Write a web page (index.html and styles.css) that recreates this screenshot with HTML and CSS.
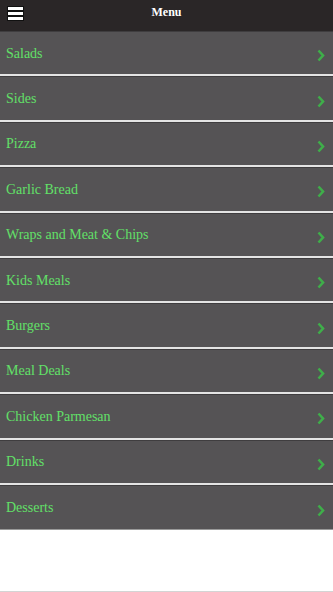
FILE: index.html
```html
<!DOCTYPE html>
<html>
<head>
<meta charset="utf-8">
<link rel="stylesheet" href="styles.css">
</head>
<body>
<header class="topbar">
  <span class="burger"><i></i><i></i><i></i></span>
  <h1 class="title">Menu</h1>
</header>
<ul class="menu">
  <li class="item"><span>Salads</span><svg class="chev" viewBox="0 0 8 13"><path d="M1.5 1.5 L6 6.5 L1.5 11.5" /></svg></li>
  <li class="item"><span>Sides</span><svg class="chev" viewBox="0 0 8 13"><path d="M1.5 1.5 L6 6.5 L1.5 11.5" /></svg></li>
  <li class="item"><span>Pizza</span><svg class="chev" viewBox="0 0 8 13"><path d="M1.5 1.5 L6 6.5 L1.5 11.5" /></svg></li>
  <li class="item"><span>Garlic Bread</span><svg class="chev" viewBox="0 0 8 13"><path d="M1.5 1.5 L6 6.5 L1.5 11.5" /></svg></li>
  <li class="item"><span>Wraps and Meat &amp; Chips</span><svg class="chev" viewBox="0 0 8 13"><path d="M1.5 1.5 L6 6.5 L1.5 11.5" /></svg></li>
  <li class="item"><span>Kids Meals</span><svg class="chev" viewBox="0 0 8 13"><path d="M1.5 1.5 L6 6.5 L1.5 11.5" /></svg></li>
  <li class="item"><span>Burgers</span><svg class="chev" viewBox="0 0 8 13"><path d="M1.5 1.5 L6 6.5 L1.5 11.5" /></svg></li>
  <li class="item"><span>Meal Deals</span><svg class="chev" viewBox="0 0 8 13"><path d="M1.5 1.5 L6 6.5 L1.5 11.5" /></svg></li>
  <li class="item"><span>Chicken Parmesan</span><svg class="chev" viewBox="0 0 8 13"><path d="M1.5 1.5 L6 6.5 L1.5 11.5" /></svg></li>
  <li class="item"><span>Drinks</span><svg class="chev" viewBox="0 0 8 13"><path d="M1.5 1.5 L6 6.5 L1.5 11.5" /></svg></li>
  <li class="item last"><span>Desserts</span><svg class="chev" viewBox="0 0 8 13"><path d="M1.5 1.5 L6 6.5 L1.5 11.5" /></svg></li>
</ul>
<div class="footer"></div>
</body>
</html>
```

FILE: styles.css
```css
html, body {
  margin: 0;
  padding: 0;
  background: #ffffff;
  font-family: "Liberation Serif", "Times New Roman", serif;
}
.topbar {
  height: 31px;
  background: #2a2627;
  display: flex;
  align-items: flex-start;
  justify-content: center;
  position: relative;
}
.burger {
  position: absolute;
  left: 8px;
  top: 7px;
  display: flex;
  flex-direction: column;
  gap: 2px;
}
.burger i {
  display: block;
  width: 15px;
  height: 3px;
  background: #ffffff;
  box-shadow: 0 0 0 1px #111;
}
.title {
  margin: 0;
  padding-top: 6px;
  color: #ffffff;
  font-size: 12px;
  font-weight: bold;
  line-height: 1;
}
.menu {
  list-style: none;
  margin: 0;
  padding: 0;
}
.item {
  box-sizing: border-box;
  height: 45.4px;
  background: #555355;
  border-top: 1px solid #3f3d3f;
  border-bottom: 2px solid #e4e4e4;
  display: flex;
  align-items: center;
  justify-content: space-between;
  padding: 0 8px 0 6px;
  color: #62e068;
  font-size: 14px;
}
.item span {
  padding-top: 1px;
}
.item.last {
  border-bottom: 1px solid #9a9a9a;
}
.chev {
  width: 8px;
  height: 13px;
  margin-top: 5px;
  fill: none;
  stroke: #3fae4a;
  stroke-width: 2.6;
}
.footer {
  height: 61px;
  border-bottom: 1px solid #d4d4d4;
}
```
